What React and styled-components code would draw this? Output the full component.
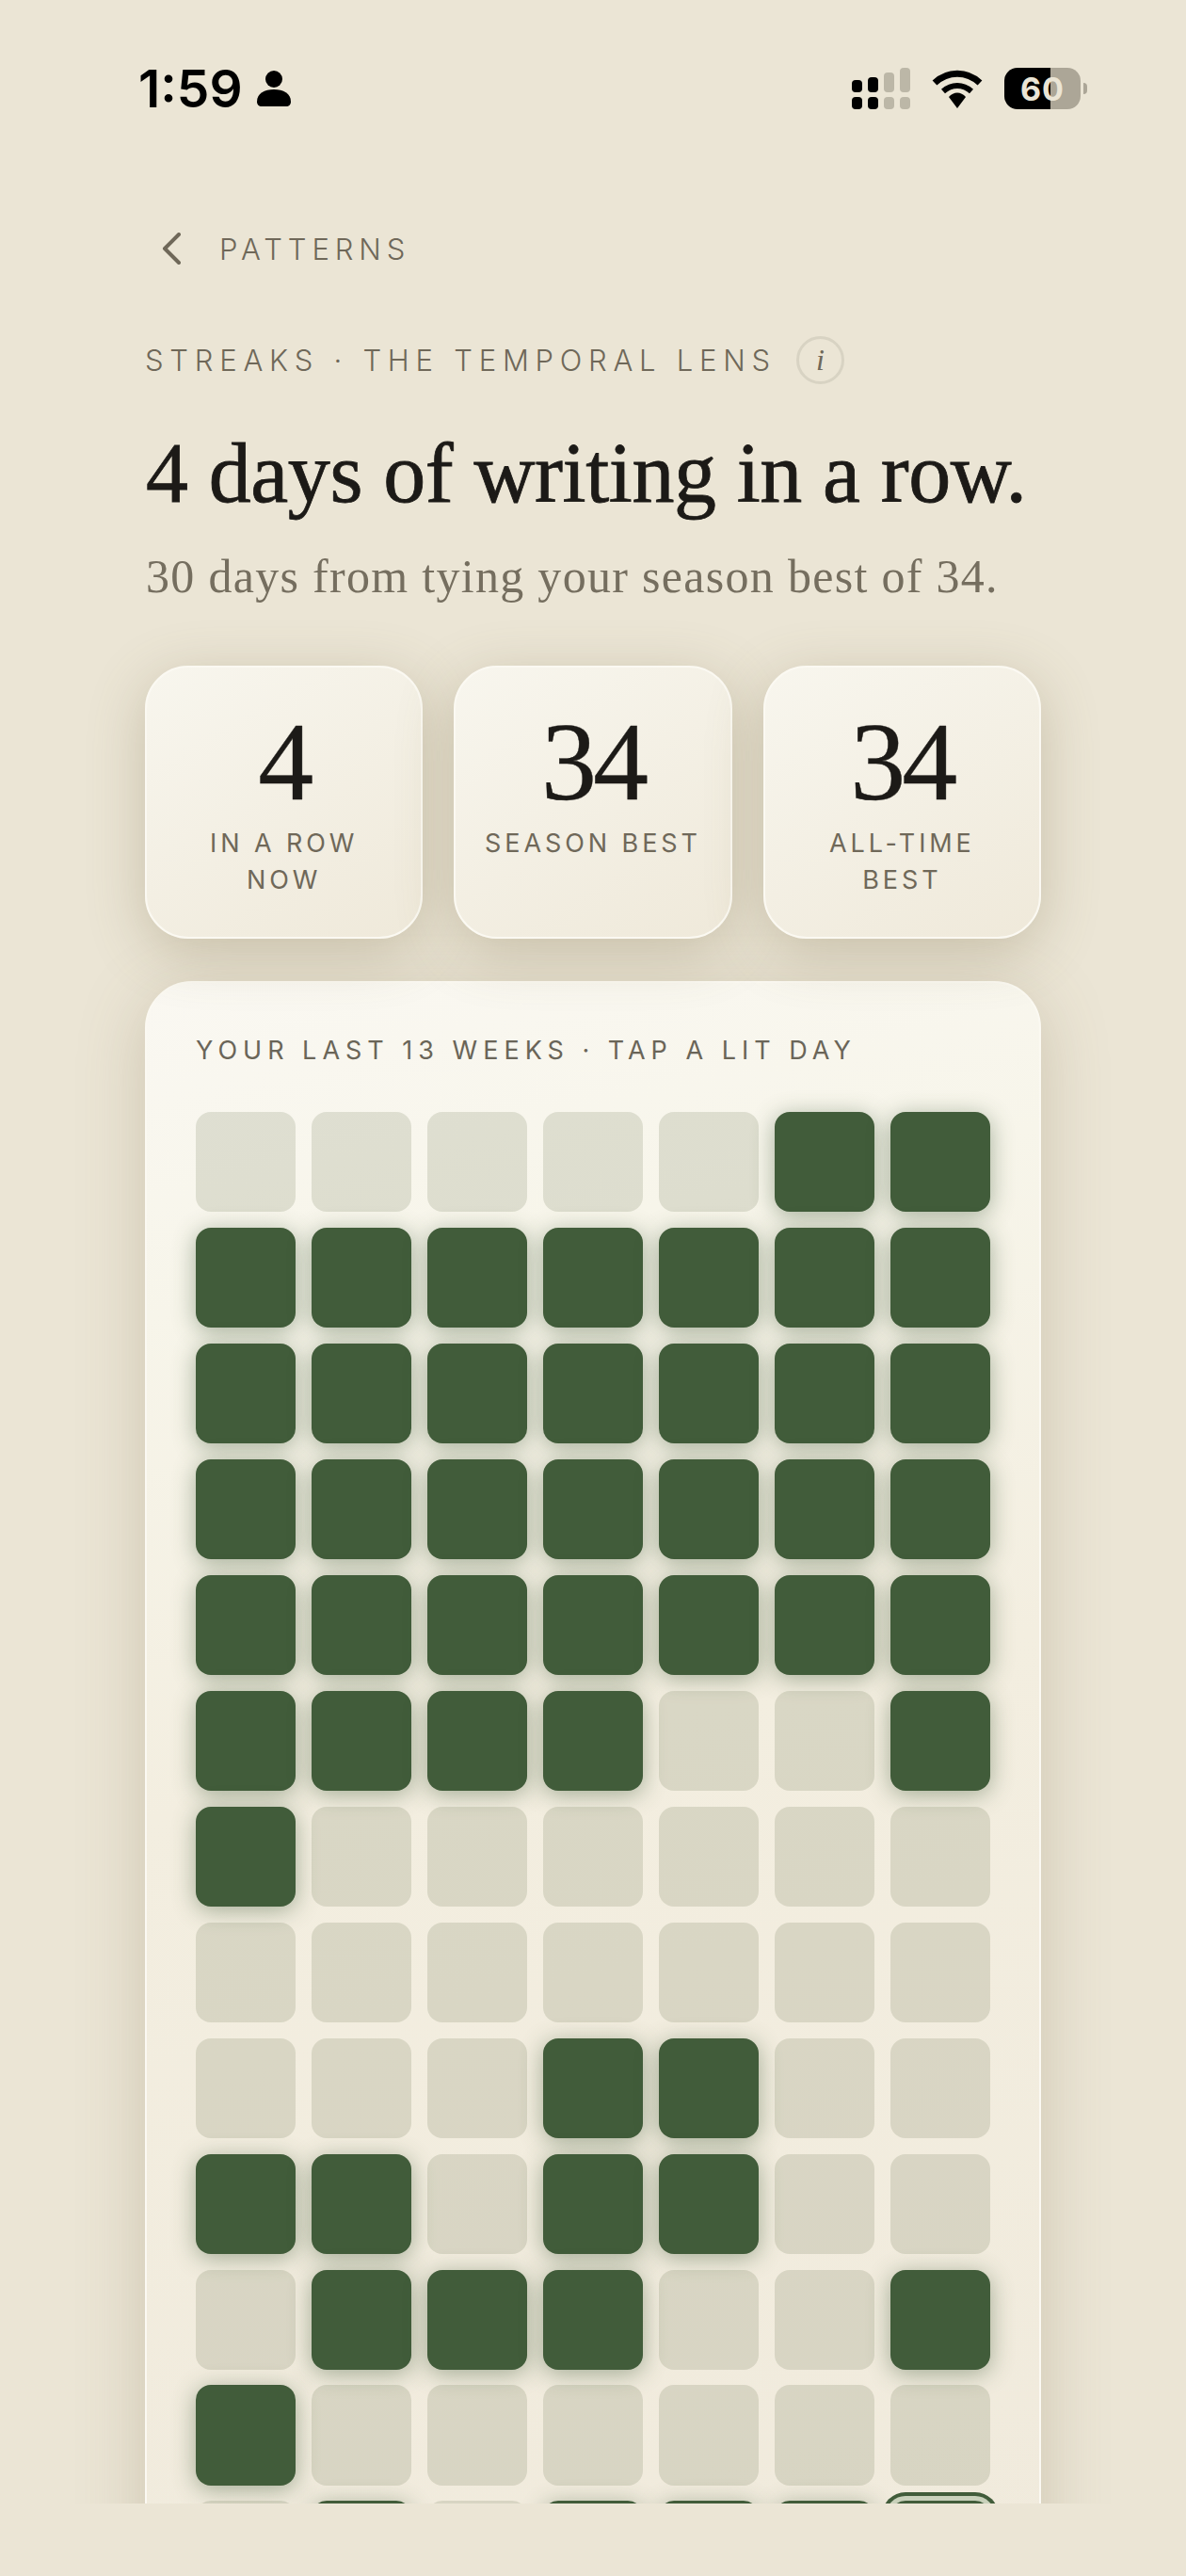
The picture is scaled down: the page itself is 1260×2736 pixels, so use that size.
import React from "react";
import styled, { createGlobalStyle } from "styled-components";

const GlobalStyle = createGlobalStyle`
  html, body {
    margin: 0;
    padding: 0;
    background: #ebe5d5;
  }
  * {
    box-sizing: border-box;
  }
`;

const Page = styled.div`
  width: 1260px;
  height: 2736px;
  overflow: hidden;
  background: #ebe5d5;
  font-family: "Inter", "Liberation Sans", sans-serif;
`;

const StatusBar = styled.div`
  height: 118px;
  padding: 70px 105px 0 147px;
  display: flex;
  align-items: center;
  justify-content: space-between;
`;

const StatusLeft = styled.div`
  display: flex;
  align-items: center;
  gap: 15px;
`;

const Time = styled.div`
  font-size: 55px;
  line-height: 48px;
  font-weight: 600;
  color: #000;
`;

const StatusRight = styled.div`
  display: flex;
  align-items: center;
  gap: 23px;
`;

const Battery = styled.div`
  position: relative;
  width: 81px;
  height: 44px;
  border-radius: 14px;
  overflow: hidden;
  background: linear-gradient(90deg, #000 60.5%, #aca697 60.5%);
  display: flex;
  align-items: center;
  justify-content: center;
  font-size: 34px;
  font-weight: 700;
  letter-spacing: 1px;
  color: #ebe5d5;
`;

const BatteryWrap = styled.div`
  display: flex;
  align-items: center;
  gap: 3px;
`;

const BatteryNub = styled.div`
  width: 4px;
  height: 12px;
  background: #aca697;
  border-radius: 0 6px 6px 0;
`;

const Scroller = styled.div`
  height: 2541px;
  overflow: hidden;
  padding: 0 154px;
`;

const BackRow = styled.div`
  margin-top: 126px;
  height: 40px;
  display: flex;
  align-items: center;
  gap: 41px;
  padding-left: 18px;
`;

const BackLabel = styled.span`
  font-size: 31px;
  font-weight: 300;
  letter-spacing: 5.9px;
  color: #6f6859;
`;

const EyebrowRow = styled.div`
  margin-top: 72px;
  height: 52px;
  display: flex;
  align-items: center;
  gap: 21px;
`;

const Eyebrow = styled.span`
  font-size: 31px;
  font-weight: 300;
  letter-spacing: 6.75px;
  color: #6f6859;
`;

const InfoBadge = styled.span`
  width: 51px;
  height: 51px;
  border-radius: 50%;
  border: 3px solid #d8d3c3;
  display: flex;
  align-items: center;
  justify-content: center;
  font-family: "Liberation Serif", serif;
  font-style: italic;
  font-size: 32px;
  color: #6f6859;
`;

const Title = styled.h1`
  margin: 45px 0 0;
  padding-left: 1px;
  font-family: "Liberation Serif", serif;
  font-size: 90px;
  line-height: 100px;
  font-weight: 400;
  letter-spacing: -0.4px;
  -webkit-text-stroke: 0.8px #1c1a17;
  color: #1c1a17;
  white-space: nowrap;
`;

const Subtitle = styled.p`
  margin: 31px 0 0;
  padding-left: 1px;
  font-family: "Liberation Serif", serif;
  font-size: 50px;
  line-height: 56px;
  letter-spacing: 1.3px;
  color: #756e5f;
  white-space: nowrap;
`;

const StatRow = styled.div`
  margin-top: 67px;
  display: grid;
  grid-template-columns: repeat(3, 1fr);
  gap: 33px;
`;

const StatCard = styled.div`
  padding: 43px 20px 41px;
  border-radius: 46px;
  border: 2.5px solid #fbf9f2;
  background: linear-gradient(150deg, #f8f6ee 0%, #efe9da 100%);
  box-shadow: 0 14px 60px rgba(120, 105, 70, 0.3);
  text-align: center;
`;

const StatValue = styled.div`
  font-family: "Liberation Serif", serif;
  font-size: 118px;
  line-height: 116px;
  letter-spacing: -4px;
  -webkit-text-stroke: 0.4px #1c1a17;
  color: #1c1a17;
`;

const StatLabel = styled.div`
  margin-top: 9px;
  font-size: 27px;
  line-height: 38.5px;
  font-weight: 400;
  letter-spacing: 0.145em;
  color: #6f6859;
`;

const CalendarCard = styled.div`
  margin-top: 45px;
  padding: 52px;
  border-radius: 50px;
  border: 2.5px solid #fbf9f2;
  background: linear-gradient(168deg, #faf8f2 0%, #f7f5ea 18%, #f3eee0 45%, #f0eadc 100%);
  box-shadow: 0 14px 70px rgba(120, 105, 70, 0.26);
`;

const CalendarHeading = styled.div`
  font-size: 27px;
  line-height: 40px;
  font-weight: 400;
  letter-spacing: 6px;
  color: #6a6558;
  white-space: nowrap;
`;

const DayGrid = styled.div`
  margin-top: 45px;
  display: grid;
  grid-template-columns: repeat(7, 1fr);
  gap: 16.6px;
`;

const Day = styled.div`
  aspect-ratio: 1;
  border-radius: 16px;
  background: ${(p) => (p.$lit ? "#415c3a" : "rgba(72, 86, 50, 0.15)")};
  box-shadow: ${(p) => {
    if (p.$today) {
      return "0 0 0 5px #c9d1bb, 0 0 0 9px #415c3a";
    }
    return p.$lit ? "0 4px 24px rgba(64, 92, 58, 0.45)" : "none";
  }};
`;

const weeks = [
  "0000011",
  "1111111",
  "1111111",
  "1111111",
  "1111111",
  "1111001",
  "1000000",
  "0000000",
  "0001100",
  "1101100",
  "0111001",
  "1000000",
  "010111T",
];

const stats = [
  { value: "4", label: ["IN A ROW", "NOW"] },
  { value: "34", label: ["SEASON BEST"] },
  { value: "34", label: ["ALL-TIME", "BEST"] },
];

const PersonIcon = () => (
  <svg width="36" height="38" viewBox="0 0 36 38">
    <circle cx="18" cy="9" r="9" fill="#000" />
    <path d="M0 33c0-9 8-13 18-13s18 4 18 13c0 3-2 5-5 5H5c-3 0-5-2-5-5z" fill="#000" />
  </svg>
);

const SignalIcon = () => (
  <svg width="62" height="44" viewBox="0 0 62 44">
    <rect x="0" y="13" width="11" height="13" rx="4" fill="#000" />
    <rect x="17" y="10" width="11" height="16" rx="4" fill="#000" />
    <rect x="34" y="5" width="11" height="21" rx="4" fill="#bcb7a7" />
    <rect x="51" y="0" width="11" height="26" rx="4" fill="#bcb7a7" />
    <rect x="0" y="31" width="11" height="13" rx="4" fill="#000" />
    <rect x="17" y="31" width="11" height="13" rx="4" fill="#000" />
    <rect x="34" y="31" width="11" height="13" rx="4" fill="#bcb7a7" />
    <rect x="51" y="31" width="11" height="13" rx="4" fill="#bcb7a7" />
  </svg>
);

const WifiIcon = () => (
  <svg width="54" height="41" viewBox="0 0 54 41">
    <path d="M3 14 C17 1 37 1 51 14" fill="none" stroke="#000" strokeWidth="7" />
    <path d="M12 23 C21 15 33 15 42 23" fill="none" stroke="#000" strokeWidth="6" />
    <path d="M18 29 C23 23 31 23 36 29 L27 41 Z" fill="#000" />
  </svg>
);

const BackChevron = () => (
  <svg width="20" height="34" viewBox="0 0 20 34">
    <path d="M18 2 L3 17 L18 32" fill="none" stroke="#6f6859" strokeWidth="4" strokeLinecap="round" strokeLinejoin="round" />
  </svg>
);

const App = () => {
  return (
    <Page>
      <GlobalStyle />
      <StatusBar>
        <StatusLeft>
          <Time>1:59</Time>
          <PersonIcon />
        </StatusLeft>
        <StatusRight>
          <SignalIcon />
          <WifiIcon />
          <BatteryWrap>
            <Battery>60</Battery>
            <BatteryNub />
          </BatteryWrap>
        </StatusRight>
      </StatusBar>
      <Scroller>
        <BackRow>
          <BackChevron />
          <BackLabel>PATTERNS</BackLabel>
        </BackRow>
        <EyebrowRow>
          <Eyebrow>STREAKS · THE TEMPORAL LENS</Eyebrow>
          <InfoBadge>i</InfoBadge>
        </EyebrowRow>
        <Title>4 days of writing in a row.</Title>
        <Subtitle>30 days from tying your season best of 34.</Subtitle>
        <StatRow>
          {stats.map((s, i) => (
            <StatCard key={i}>
              <StatValue>{s.value}</StatValue>
              <StatLabel>
                {s.label.map((line) => (
                  <div key={line}>{line}</div>
                ))}
              </StatLabel>
            </StatCard>
          ))}
        </StatRow>
        <CalendarCard>
          <CalendarHeading>YOUR LAST 13 WEEKS · TAP A LIT DAY</CalendarHeading>
          <DayGrid>
            {weeks.map((week, w) =>
              week.split("").map((d, i) => (
                <Day key={`${w}-${i}`} $lit={d !== "0"} $today={d === "T"} />
              ))
            )}
          </DayGrid>
        </CalendarCard>
      </Scroller>
    </Page>
  );
};

export default App;
